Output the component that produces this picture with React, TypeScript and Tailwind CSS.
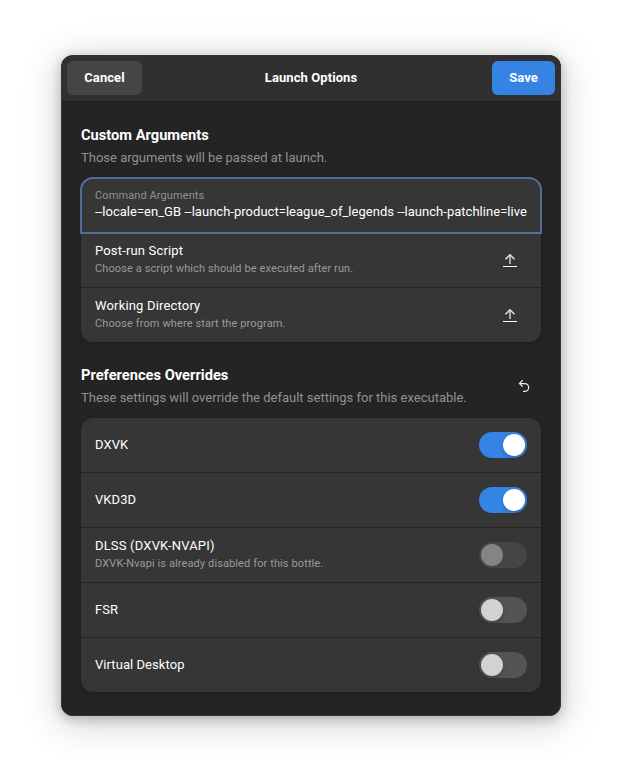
import React from "react";

function UploadIcon() {
  return (
    <svg width="16" height="16" viewBox="0 0 16 16" fill="none" className="mr-[9px] shrink-0">
      <path d="M8 12V3" stroke="#a9a9a9" strokeWidth="2" />
      <path d="M3.5 7.2 8 2.8l4.5 4.4" stroke="#dedede" strokeWidth="1.6" />
      <path d="M1 14.5h14" stroke="#fff" strokeWidth="1" />
    </svg>
  );
}

function UndoIcon() {
  return (
    <svg width="16" height="16" viewBox="0 0 16 16" fill="none" stroke="#ececec" strokeWidth="1.25">
      <path d="M6.7 2.2 3.5 5.4l3.2 3.2" />
      <path d="M3.6 5.5h5.1a3.9 3.9 0 0 1 0 7.9H7" />
    </svg>
  );
}

function Toggle({ on = false, disabled = false }: { on?: boolean; disabled?: boolean }) {
  return (
    <div
      role="switch"
      aria-checked={on}
      className={`flex h-[26px] w-12 shrink-0 items-center rounded-full p-0.5 ${
        on ? "justify-end bg-[#3584e4]" : disabled ? "bg-[#454545]" : "bg-[#545454]"
      }`}
    >
      <div
        className={`size-[22px] rounded-full ${
          on
            ? "bg-white shadow-[0_2px_4px_rgba(0,0,0,0.2)]"
            : disabled
              ? "bg-[#848484]"
              : "bg-[#d2d2d2] shadow-[0_2px_4px_rgba(0,0,0,0.2)]"
        }`}
      />
    </div>
  );
}

type RowProps = { title: string; subtitle?: string; children?: React.ReactNode };

function Row({ title, subtitle, children }: RowProps) {
  return (
    <div className="flex h-[55px] items-center justify-between px-3.5 last:h-[54px]">
      <div className="whitespace-nowrap pb-px">
        <div
          className={`text-[13px] leading-[18px] text-white ${
            subtitle ? "tracking-[0.17px]" : "tracking-[0.06px]"
          }`}
        >
          {title}
        </div>
        {subtitle && (
          <div className="text-[11px] leading-[17px] tracking-[0.11px] text-[#9a9a9a]">{subtitle}</div>
        )}
      </div>
      {children}
    </div>
  );
}

function Heading({ title, subtitle }: { title: string; subtitle: string }) {
  return (
    <div className="whitespace-nowrap">
      <h2 className="text-[14.67px] font-bold leading-5 text-white">{title}</h2>
      <p className="mt-[3px] text-[13px] leading-5 text-[#919191]">{subtitle}</p>
    </div>
  );
}

const card =
  "divide-y divide-[#242424] rounded-xl bg-[#363636] shadow-[0_0_0_1px_rgba(0,0,0,0.03),0_1px_3px_1px_rgba(0,0,0,0.07),0_2px_6px_2px_rgba(0,0,0,0.03)]";

export default function App() {
  return (
    <div className="h-[783px] w-[622px] overflow-hidden bg-white px-[61px] pt-[55px] font-['Roboto',sans-serif]">
      <div className="h-[661px] w-[500px] overflow-hidden rounded-xl bg-[#242424] shadow-[0_3px_12px_1px_rgba(0,0,0,0.22),0_6px_36px_6px_rgba(0,0,0,0.14)]">
        <div className="flex h-full flex-col rounded-xl border border-[#353535]">
          <header className="flex h-[46px] shrink-0 items-start justify-between rounded-t-[11px] border-b border-[#202020] bg-[#303030] px-[5px] pt-[5px] text-[13px] font-bold leading-[33px] tracking-[0.08px] text-white">
            <div className="flex flex-1">
              <button className="h-[34px] w-[75px] rounded-md bg-[#454545] pb-px">Cancel</button>
            </div>
            <h1>Launch Options</h1>
            <div className="flex flex-1 justify-end">
              <button className="h-[34px] w-[63px] rounded-md bg-[#3584e4] pb-px">Save</button>
            </div>
          </header>
          <main className="px-[19px] pt-[23px]">
            <Heading title="Custom Arguments" subtitle="Those arguments will be passed at launch." />
            <div className={`mt-[10px] ${card}`}>
              <div className="h-[55px] rounded-t-xl px-3.5 pt-[9px] outline-2 -outline-offset-1 outline-[#4f6f98]">
                <div className="pt-px text-[11px] leading-4 tracking-[0.1px] text-[#919191]">Command Arguments</div>
                <div className="-mt-px whitespace-nowrap text-[13px] leading-[18px] tracking-[0.03px] text-white">
                  --locale=en_GB --launch-product=league_of_legends --launch-patchline=live
                </div>
              </div>
              <Row title="Post-run Script" subtitle="Choose a script which should be executed after run.">
                <UploadIcon />
              </Row>
              <Row title="Working Directory" subtitle="Choose from where start the program.">
                <UploadIcon />
              </Row>
            </div>
            <div className="mt-[23px] flex items-center justify-between">
              <Heading title="Preferences Overrides" subtitle="These settings will override the default settings for this executable." />
              <div className="mr-[9px] pb-px"><UndoIcon /></div>
            </div>
            <div className={`mt-[10px] ${card}`}>
              <Row title="DXVK"><Toggle on /></Row>
              <Row title="VKD3D"><Toggle on /></Row>
              <Row title="DLSS (DXVK-NVAPI)" subtitle="DXVK-Nvapi is already disabled for this bottle."><Toggle disabled /></Row>
              <Row title="FSR"><Toggle /></Row>
              <Row title="Virtual Desktop"><Toggle /></Row>
            </div>
          </main>
        </div>
      </div>
    </div>
  );
}
